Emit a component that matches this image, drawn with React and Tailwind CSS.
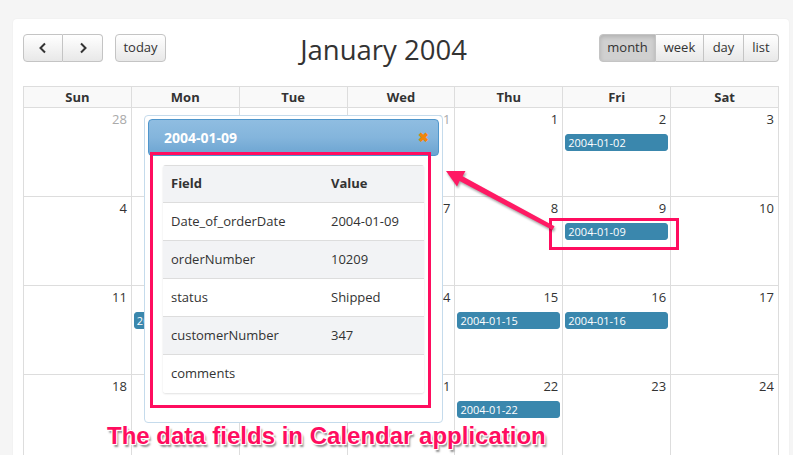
const weeks = [
  [
    { d: 28, other: true },
    { d: 29, other: true },
    { d: 30, other: true },
    { d: 31, other: true },
    { d: 1 },
    { d: 2, ev: "2004-01-02" },
    { d: 3 },
  ],
  [
    { d: 4 },
    { d: 5 },
    { d: 6 },
    { d: 7 },
    { d: 8 },
    { d: 9, ev: "2004-01-09" },
    { d: 10 },
  ],
  [
    { d: 11 },
    { d: 12, ev: "2004-01-12" },
    { d: 13 },
    { d: 14 },
    { d: 15, ev: "2004-01-15" },
    { d: 16, ev: "2004-01-16" },
    { d: 17 },
  ],
  [
    { d: 18 },
    { d: 19 },
    { d: 20 },
    { d: 21 },
    { d: 22, ev: "2004-01-22" },
    { d: 23 },
    { d: 24 },
  ],
];

const days = ["Sun", "Mon", "Tue", "Wed", "Thu", "Fri", "Sat"];

const fields = [
  ["Date_of_orderDate", "2004-01-09"],
  ["orderNumber", "10209"],
  ["status", "Shipped"],
  ["customerNumber", "347"],
  ["comments", ""],
];

const btn =
  "h-[28px] px-[9px] text-[13px] text-[#333] border border-[#c4c4c4] bg-gradient-to-b from-[#ffffff] to-[#e8e8e8] flex items-center justify-center";

const Toolbar = () => (
  <div className="flex items-center h-[28px]">
    <div className="flex">
      <button className={`${btn} w-[40px] rounded-l-[4px]`}>
        <svg width="10" height="12" viewBox="0 0 10 12">
          <path d="M7 1.5 L2.5 6 L7 10.5" fill="none" stroke="#333" strokeWidth="2" />
        </svg>
      </button>
      <button className={`${btn} w-[40px] rounded-r-[4px] border-l-0`}>
        <svg width="10" height="12" viewBox="0 0 10 12">
          <path d="M3 1.5 L7.5 6 L3 10.5" fill="none" stroke="#333" strokeWidth="2" />
        </svg>
      </button>
    </div>
    <button className={`${btn} ml-[12px] w-[51px] rounded-[4px]`}>today</button>
    <div className="flex-1 text-center text-[27.5px] text-[#333] leading-none mt-[3px] pl-[2px]">
      January 2004
    </div>
    <div className="flex">
      <button className={`${btn} w-[57px] rounded-l-[4px] !bg-none bg-[#d0d0d0] shadow-[inset_0_2px_4px_rgba(0,0,0,0.15)]`}>
        month
      </button>
      <button className={`${btn} w-[48px] border-l-0`}>week</button>
      <button className={`${btn} w-[40px] border-l-0`}>day</button>
      <button className={`${btn} w-[35px] border-l-0 rounded-r-[4px]`}>list</button>
    </div>
  </div>
);

const Calendar = () => (
  <div className="mt-[24px] border-l border-[#ddd]">
    <div className="grid grid-cols-7 border-t border-[#ddd] bg-[#f9f9f9]">
      {days.map((d) => (
        <div
          key={d}
          className="h-[21px] border-r border-b border-[#ddd] text-[13px] font-bold text-[#333] text-center leading-[20px]"
        >
          {d}
        </div>
      ))}
    </div>
    {weeks.map((w, i) => (
      <div key={i} className="grid grid-cols-7">
        {w.map((c) => (
          <div key={c.d} className="h-[89px] border-r border-b border-[#ddd] px-[2px]">
            <div
              className={`text-right text-[13px] pr-[2px] pt-[2px] leading-[18px] ${
                c.other ? "text-[#aaa]" : "text-[#333]"
              }`}
            >
              {c.d}
            </div>
            {c.ev && (
              <div className="mt-[6px] h-[17px] bg-[#3a87ad] border border-[#3a87ad] rounded-[3px] text-white text-[11px] leading-[15px] pl-[2px]">
                {c.ev}
              </div>
            )}
          </div>
        ))}
      </div>
    ))}
  </div>
);

const Popup = () => (
  <div className="absolute left-[144px] top-[115px] w-[299px] h-[308px] bg-white border border-[#c5dbec] rounded-[4px] p-[3px]">
    <div className="h-[37px] rounded-[4px] border border-[#4f96cc] bg-gradient-to-b from-[#8fbde1] via-[#84b5dc] to-[#6ca4d1] flex items-center justify-between pl-[15px] pr-[9px]">
      <span className="text-white font-bold text-[14px]">2004-01-09</span>
      <span className="text-[#f0860a] text-[13px] font-bold leading-none">✖</span>
    </div>
    <div className="mt-[9px] ml-[15px] w-[261px] rounded-[3px] shadow-[0_1px_2px_rgba(0,0,0,0.12)] overflow-hidden">
      <div className="flex h-[38px] items-center bg-[#f2f3f5] border-t border-b border-[#ddd] text-[13px] font-bold text-[#333]">
        <div className="w-[168px] pl-[8px]">Field</div>
        <div>Value</div>
      </div>
      {fields.map(([f, v], i) => (
        <div
          key={f}
          className={`flex h-[38px] items-center text-[13px] text-[#333] ${
            i < fields.length - 1 ? "border-b border-[#ddd]" : ""
          } ${i % 2 === 1 ? "bg-[#f2f3f5]" : "bg-white"}`}
        >
          <div className="w-[168px] pl-[8px]">{f}</div>
          <div>{v}</div>
        </div>
      ))}
    </div>
  </div>
);

export default function App() {
  return (
    <div className="relative w-[793px] h-[455px] overflow-hidden bg-[#f5f5f5] pt-[19px] pl-[13px] font-['Open_Sans',sans-serif]">
      <div className="w-[776px] bg-white rounded-t-[4px] shadow-[0_0_2px_rgba(0,0,0,0.06)] pt-[15px] px-[10px] h-[460px]">
        <Toolbar />
        <Calendar />
      </div>

      <Popup />

      {/* annotations */}
      <div className="absolute left-[150px] top-[152px] w-[281px] h-[256px] border-[3px] border-[#ff0d5f]" />
      <div className="absolute left-[549px] top-[218px] w-[130px] h-[32px] border-[3px] border-[#ff0d5f]" />
      <svg
        className="absolute left-0 top-0 drop-shadow-[1px_2px_1px_rgba(0,0,0,0.35)]"
        width="793"
        height="455"
      >
        <polygon
          points="446,171 465.5,171 462.6,176.2 554.5,226.3 552.5,230 459.6,181 457,186.5"
          fill="#ff1a64"
        />
      </svg>
      <div className="absolute left-[107px] top-[421px] font-['Liberation_Sans',Arial,sans-serif] font-bold text-[24px] leading-[30px] text-[#ff0d5f] [text-shadow:-1px_-1px_0_#fff,1px_-1px_0_#fff,-1px_1px_0_#fff,1px_1px_0_#fff,0_-1px_0_#fff,0_1px_0_#fff,2px_3px_2px_rgba(0,0,0,0.45)]">
        The data fields in Calendar application
      </div>
    </div>
  );
}
